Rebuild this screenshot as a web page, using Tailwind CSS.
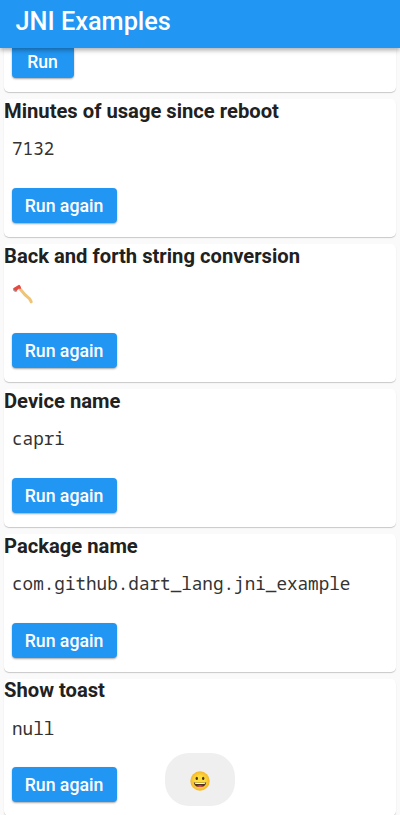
<!DOCTYPE html>
<html lang="en">
<head>
<meta charset="utf-8">
<title>JNI Examples</title>
<script src="https://cdn.jsdelivr.net/npm/@tailwindcss/browser@4"></script>
</head>
<body class="relative flex h-[815px] w-[400px] flex-col overflow-hidden bg-[#fafafa] font-['Roboto',sans-serif] whitespace-nowrap text-[#212121]">
<header class="z-10 h-12 shrink-0 bg-[#2196f3] pl-[15.5px] text-[25.3px] leading-[44px] font-medium text-white shadow-[0_2px_5px_rgba(0,0,0,0.35)]">JNI Examples</header>
<main class="flex flex-col gap-[7px] px-1">
  <section class="h-11 shrink-0 rounded-b-[5px] bg-white pl-[7.5px] shadow-[0_1px_1px_rgba(0,0,0,0.2)]">
    <button class="block h-[30px] w-[62px] rounded-b-[4px] bg-[#2196f3] pb-[2px] text-[17.6px] leading-[23px] font-medium text-white shadow-[0_1px_2px_rgba(0,0,0,0.35)]">Run</button>
  </section>
  <section class="h-[138px] shrink-0 rounded-[5px] bg-white shadow-[0_1px_1px_rgba(0,0,0,0.2)]">
    <h2 class="h-6 text-[20.2px] leading-6 font-bold">Minutes of usage since reboot</h2>
    <p class="mt-3 ml-2 h-[53px] font-['Noto_Sans_Mono','Droid_Sans_Mono','DejaVu_Sans_Mono',monospace] text-[17.64px] leading-[27px] text-[#333]">7132</p>
    <button class="ml-[7.5px] block h-[35px] w-[105px] rounded-[4px] bg-[#2196f3] pt-px text-[17.7px] leading-[35px] font-medium text-white shadow-[0_1px_2px_rgba(0,0,0,0.35)]">Run again</button>
  </section>
  <section class="h-[138px] shrink-0 rounded-[5px] bg-white shadow-[0_1px_1px_rgba(0,0,0,0.2)]">
    <h2 class="h-6 text-[20.2px] leading-6 font-bold">Back and forth string conversion</h2>
    <div class="mt-3 ml-2 h-[53px] pt-1">
      <svg class="h-5 w-[22px]" viewBox="0 0 22 20" role="img" aria-label="Axe">
        <path d="M7.5 4.5C10.5 7 11.2 10 15 12.5C18 14.5 18.5 16.2 19.2 17.8" fill="none" stroke="#efc477" stroke-width="3" stroke-linecap="round"/>
        <path d="M1.2 4.2L7 .8C8.2 1 9.3 3 9 4.8L6.5 4.7L4.2 7.5C2.2 7.4 1 5.8 1.2 4.2Z" fill="#e84842"/>
        <path d="M1.2 3.8C1.4 5.7 2.6 6.8 4.4 6.8L4.6 7.9C1.9 8.2.2 5.8 1.2 3.8Z" fill="#9b9da3"/>
      </svg>
    </div>
    <button class="ml-[7.5px] block h-[35px] w-[105px] rounded-[4px] bg-[#2196f3] pt-px text-[17.7px] leading-[35px] font-medium text-white shadow-[0_1px_2px_rgba(0,0,0,0.35)]">Run again</button>
  </section>
  <section class="h-[138px] shrink-0 rounded-[5px] bg-white shadow-[0_1px_1px_rgba(0,0,0,0.2)]">
    <h2 class="h-6 text-[20.2px] leading-6 font-bold">Device name</h2>
    <p class="mt-3 ml-2 h-[53px] font-['Noto_Sans_Mono','Droid_Sans_Mono','DejaVu_Sans_Mono',monospace] text-[17.64px] leading-[27px] text-[#333]">capri</p>
    <button class="ml-[7.5px] block h-[35px] w-[105px] rounded-[4px] bg-[#2196f3] pt-px text-[17.7px] leading-[35px] font-medium text-white shadow-[0_1px_2px_rgba(0,0,0,0.35)]">Run again</button>
  </section>
  <section class="h-[138px] shrink-0 rounded-[5px] bg-white shadow-[0_1px_1px_rgba(0,0,0,0.2)]">
    <h2 class="h-6 text-[20.2px] leading-6 font-bold">Package name</h2>
    <p class="mt-3 ml-2 h-[53px] font-['Noto_Sans_Mono','Droid_Sans_Mono','DejaVu_Sans_Mono',monospace] text-[17.64px] leading-[27px] text-[#333]">com.github.dart_lang.jni_example</p>
    <button class="ml-[7.5px] block h-[35px] w-[105px] rounded-[4px] bg-[#2196f3] pt-px text-[17.7px] leading-[35px] font-medium text-white shadow-[0_1px_2px_rgba(0,0,0,0.35)]">Run again</button>
  </section>
  <section class="h-[137px] shrink-0 rounded-[5px] bg-white shadow-[0_1px_1px_rgba(0,0,0,0.2)]">
    <h2 class="h-6 text-[20.2px] leading-[23px] font-bold">Show toast</h2>
    <p class="mt-3 ml-2 h-[52px] font-['Noto_Sans_Mono','Droid_Sans_Mono','DejaVu_Sans_Mono',monospace] text-[17.64px] leading-[27px] text-[#333]">null</p>
    <button class="ml-[7.5px] block h-[35px] w-[105px] rounded-[4px] bg-[#2196f3] pt-px text-[17.7px] leading-[35px] font-medium text-white shadow-[0_1px_2px_rgba(0,0,0,0.35)]">Run again</button>
  </section>
</main>
<div class="absolute top-[753px] left-[165px] z-20 flex h-[53px] w-[70px] items-center justify-center rounded-[24px] bg-[#efefef]">
  <svg class="mt-0.5 h-5 w-5" viewBox="0 0 20 20" role="img" aria-label="Grinning face">
    <defs><radialGradient id="face"><stop offset=".5" stop-color="#fddc3d"/><stop offset="1" stop-color="#f5b62b"/></radialGradient></defs>
    <circle cx="10" cy="10" r="9.7" fill="url(#face)"/>
    <ellipse cx="6.8" cy="7.4" rx="1.2" ry="1.6" fill="#493522"/>
    <ellipse cx="13.2" cy="7.4" rx="1.2" ry="1.6" fill="#493522"/>
    <path d="M3.8 11.2Q10 12.5 16.2 11.2C16 14.4 13.4 16 10 16S4 14.4 3.8 11.2Z" fill="#4a3027"/>
    <path d="M4.5 11.5Q10 12.7 15.5 11.5L15 12.7Q10 13.4 5 12.7Z" fill="#fff"/>
    <path d="M6.5 15Q10 13.4 13.5 15Q10 16.8 6.5 15Z" fill="#ed5048"/>
  </svg>
</div>
</body>
</html>
